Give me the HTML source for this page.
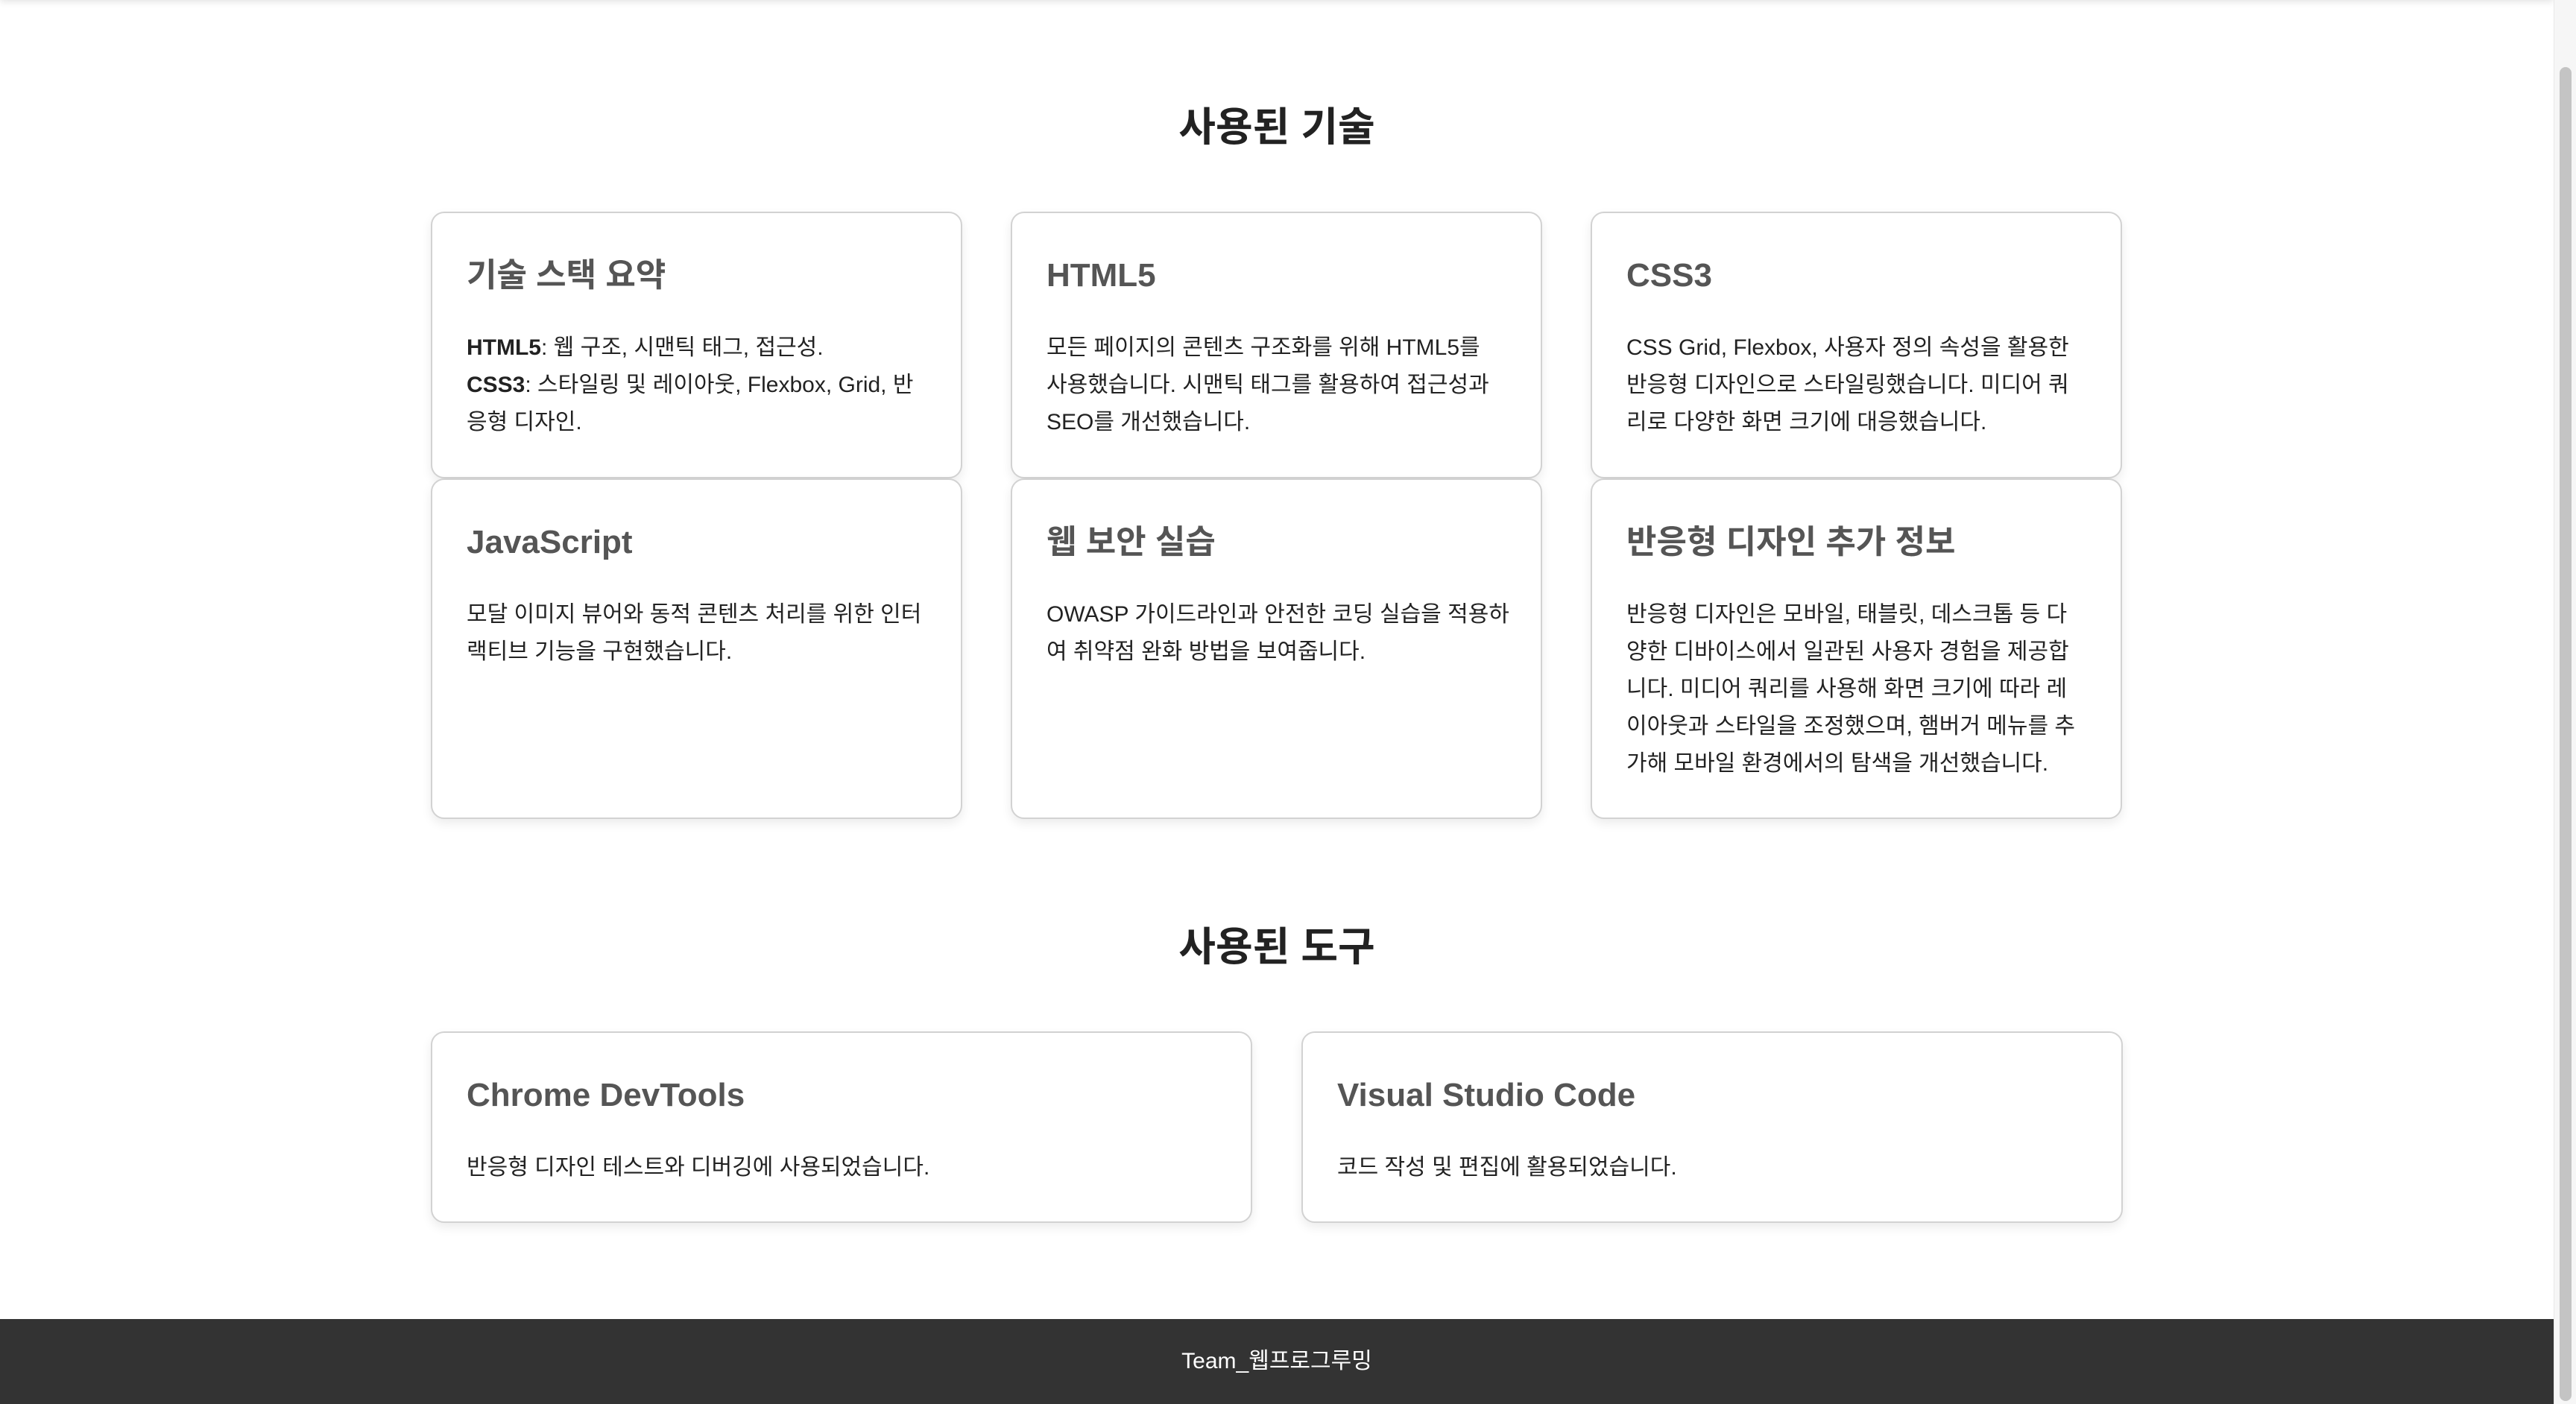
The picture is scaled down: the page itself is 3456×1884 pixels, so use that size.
<!DOCTYPE html>
<html><head><meta charset="utf-8"><style>
*{box-sizing:border-box;margin:0;padding:0}
html,body{width:3456px;height:1884px;overflow:hidden;background:#fff}
body{font-family:"Liberation Sans","Noto Sans CJK KR",sans-serif;color:#333;position:relative}
.topshadow{position:absolute;left:0;top:-20px;width:3426px;height:20px;box-shadow:0 2px 10px rgba(0,0,0,.12)}
.sb{position:absolute;right:0;top:0;width:30px;height:1884px;background:#f6f6f6;border-left:1px solid #e8e8e8}
.sb div{position:absolute;left:7px;top:90px;width:16px;height:1790px;background:#c4c4c4;border-radius:8px}
h2{position:absolute;left:0;width:3426px;text-align:center;font-size:54px;font-weight:bold;color:#222}
.card{position:absolute;background:#fff;border:2px solid #d2d2d2;border-radius:18px;box-shadow:0 6px 14px rgba(0,0,0,.08);padding:56px 20px 46px 46px}
.card h3{font-size:44px;font-weight:bold;color:#555;line-height:56px;margin-bottom:44px}
.card p{font-size:30px;line-height:50px;color:#222;white-space:nowrap}
footer{position:absolute;left:0;top:1770px;width:3426px;height:114px;background:#333;color:#fff;text-align:center;font-size:30px;line-height:114px}
</style></head><body>
<div class="topshadow"></div>
<h2 style="top:126px">사용된 기술</h2>
<div class="card" style="left:578px;top:284px;width:713px;height:358px"><h3>기술 스택 요약</h3><p><b>HTML5</b>: 웹 구조, 시맨틱 태그, 접근성.<br><b>CSS3</b>: 스타일링 및 레이아웃, Flexbox, Grid, 반<br>응형 디자인.</p></div>
<div class="card" style="left:1356px;top:284px;width:713px;height:358px"><h3>HTML5</h3><p>모든 페이지의 콘텐츠 구조화를 위해 HTML5를<br>사용했습니다. 시맨틱 태그를 활용하여 접근성과<br>SEO를 개선했습니다.</p></div>
<div class="card" style="left:2134px;top:284px;width:713px;height:358px"><h3>CSS3</h3><p>CSS Grid, Flexbox, 사용자 정의 속성을 활용한<br>반응형 디자인으로 스타일링했습니다. 미디어 쿼<br>리로 다양한 화면 크기에 대응했습니다.</p></div>
<div class="card" style="left:578px;top:642px;width:713px;height:457px"><h3>JavaScript</h3><p>모달 이미지 뷰어와 동적 콘텐츠 처리를 위한 인터<br>랙티브 기능을 구현했습니다.</p></div>
<div class="card" style="left:1356px;top:642px;width:713px;height:457px"><h3>웹 보안 실습</h3><p>OWASP 가이드라인과 안전한 코딩 실습을 적용하<br>여 취약점 완화 방법을 보여줍니다.</p></div>
<div class="card" style="left:2134px;top:642px;width:713px;height:457px"><h3>반응형 디자인 추가 정보</h3><p>반응형 디자인은 모바일, 태블릿, 데스크톱 등 다<br>양한 디바이스에서 일관된 사용자 경험을 제공합<br>니다. 미디어 쿼리를 사용해 화면 크기에 따라 레<br>이아웃과 스타일을 조정했으며, 햄버거 메뉴를 추<br>가해 모바일 환경에서의 탐색을 개선했습니다.</p></div>
<h2 style="top:1226px">사용된 도구</h2>
<div class="card" style="left:578px;top:1384px;width:1102px;height:257px"><h3>Chrome DevTools</h3><p>반응형 디자인 테스트와 디버깅에 사용되었습니다.</p></div>
<div class="card" style="left:1746px;top:1384px;width:1102px;height:257px"><h3>Visual Studio Code</h3><p>코드 작성 및 편집에 활용되었습니다.</p></div>
<footer>Team_웹프로그루밍</footer>
<div class="sb"><div></div></div>
</body></html>
